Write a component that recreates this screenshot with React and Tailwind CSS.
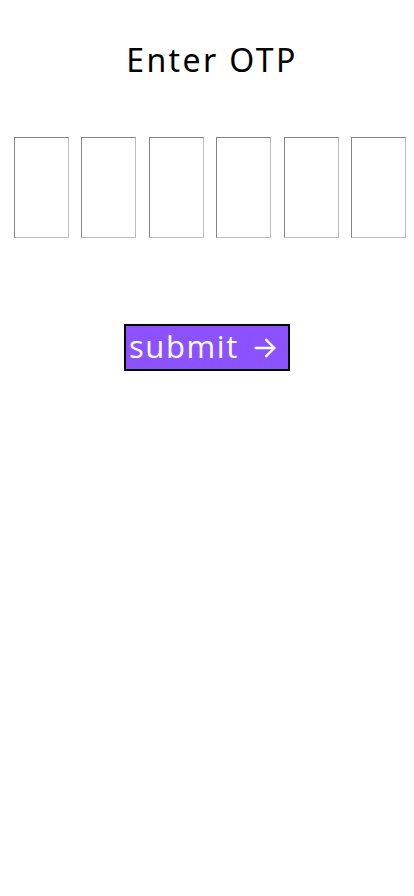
import React from "react";

export default function App() {
  const boxes = [0, 1, 2, 3, 4, 5];
  return (
    <div className="w-[414px] h-[896px] bg-white flex flex-col items-center" style={{ fontFamily: '"Open Sans", sans-serif' }}>
      <h1 className="mt-[36px] pl-[10px] text-[32px] leading-[48px] tracking-[2.4px] text-black" style={{ fontFamily: '"Noto Sans", Lato, sans-serif' }}>
        Enter OTP
      </h1>
      <div className="mt-[53px] w-full pl-[14px] flex gap-[12.4px]">
        {boxes.map((i) => (
          <input
            key={i}
            type="text"
            maxLength={1}
            className="w-[55px] h-[101px] border border-t-[#858585] border-l-[#858585] border-r-[#bdbdbd] border-b-[#bdbdbd] bg-white outline-none text-center text-2xl"
          />
        ))}
      </div>
      <button className="mt-[86px] h-[47px] w-[166px] bg-[#8c52ff] border-2 border-black flex items-center pl-[3px] gap-[12px] text-white text-[31px] tracking-[1.6px] leading-none">
        <span className="-mt-[2px]">submit</span>
        <svg width="28" height="28" viewBox="0 0 24 24" fill="none" stroke="white" strokeWidth="2" strokeLinecap="round" strokeLinejoin="round">
          <path d="M4 12h16" />
          <path d="M13 5l7 7-7 7" />
        </svg>
      </button>
    </div>
  );
}
